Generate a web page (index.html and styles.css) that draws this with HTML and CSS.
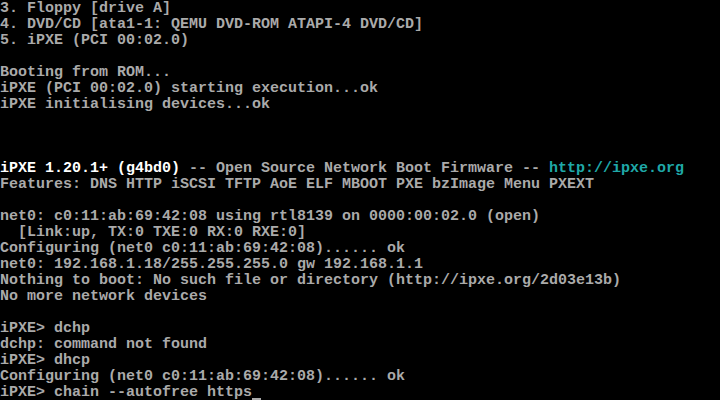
FILE: index.html
```html
<!DOCTYPE html>
<html>
<head>
<meta charset="utf-8">
<link rel="stylesheet" href="styles.css">
</head>
<body>
<pre class="console">3. Floppy [drive A]
4. DVD/CD [ata1-1: QEMU DVD-ROM ATAPI-4 DVD/CD]
5. iPXE (PCI 00:02.0)

Booting from ROM...
iPXE (PCI 00:02.0) starting execution...ok
iPXE initialising devices...ok



<span class="bright">iPXE 1.20.1+ (g4bd0)</span> -- Open Source Network Boot Firmware -- <span class="cyan">http://ipxe.org</span>
Features: DNS HTTP iSCSI TFTP AoE ELF MBOOT PXE bzImage Menu PXEXT

net0: c0:11:ab:69:42:08 using rtl8139 on 0000:00:02.0 (open)
  [Link:up, TX:0 TXE:0 RX:0 RXE:0]
Configuring (net0 c0:11:ab:69:42:08)...... ok
net0: 192.168.1.18/255.255.255.0 gw 192.168.1.1
Nothing to boot: No such file or directory (http://ipxe.org/2d03e13b)
No more network devices

iPXE&gt; dchp
dchp: command not found
iPXE&gt; dhcp
Configuring (net0 c0:11:ab:69:42:08)...... ok
iPXE&gt; chain --autofree https<span class="cursor"> </span></pre>
</body>
</html>
```

FILE: styles.css
```css
html, body {
  margin: 0;
  padding: 0;
  background: #000;
  width: 720px;
  height: 400px;
  overflow: hidden;
}
.console {
  margin: 0;
  padding: 1px 0 0 0;
  font-family: "Liberation Mono", "DejaVu Sans Mono", monospace;
  font-size: 15px;
  line-height: 16px;
  color: #aaaaaa;
  white-space: pre;
  font-weight: bold;
}
.bright {
  color: #ffffff;
}
.cyan {
  color: #1fa8a8;
}
.cursor {
  display: inline-block;
  width: 9px;
  height: 16px;
  vertical-align: top;
  box-shadow: inset 0 -3px 0 #aaaaaa;
}
```
